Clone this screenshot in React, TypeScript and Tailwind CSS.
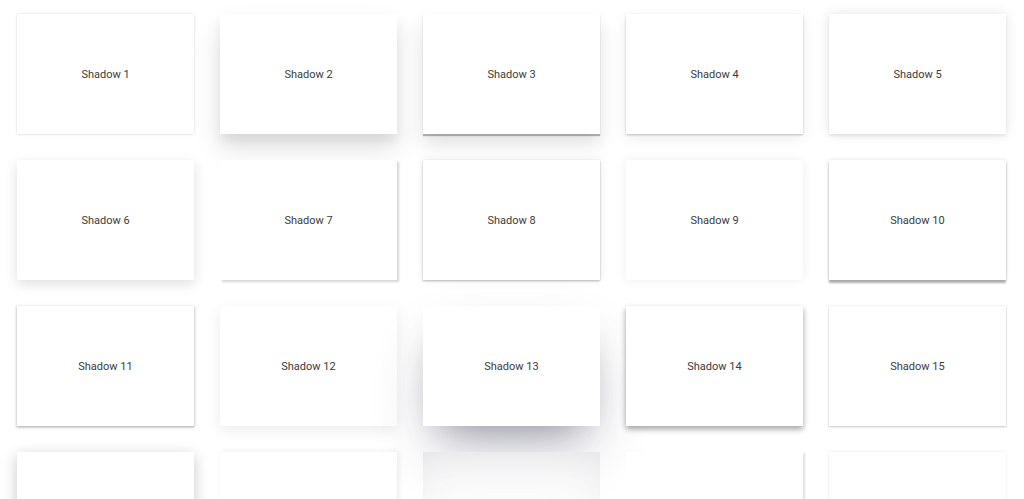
import React from "react";

// Each card shows a different box-shadow recipe.
const shadows: string[] = [
  "shadow-[0_0_2px_rgba(0,0,0,0.14),0_1px_3px_rgba(0,0,0,0.05)]",
  "shadow-[0_14px_26px_rgba(0,0,0,0.12),0_8px_10px_rgba(0,0,0,0.06)]",
  "shadow-[0_2px_1px_rgba(0,0,0,0.28),0_10px_18px_rgba(0,0,0,0.12)]",
  "shadow-[0_1px_2px_rgba(0,0,0,0.22),0_4px_14px_rgba(0,0,0,0.08)]",
  "shadow-[0_0_12px_rgba(0,0,0,0.1),0_2px_3px_rgba(0,0,0,0.08)]",
  "shadow-[0_4px_12px_rgba(0,0,0,0.13)]",
  "shadow-[2px_2px_2px_rgba(0,0,0,0.16)]",
  "shadow-[0_1px_2px_rgba(0,0,0,0.28),0_0_10px_rgba(0,0,0,0.08)]",
  "shadow-[0_0_10px_rgba(0,0,0,0.07)]",
  "shadow-[0_3px_2px_rgba(0,0,0,0.3),0_0_4px_rgba(0,0,0,0.12)]",
  "shadow-[0_1px_2px_rgba(60,64,67,0.3),0_1px_3px_1px_rgba(60,64,67,0.15)]",
  "shadow-[0_4px_14px_rgba(0,0,0,0.08)]",
  "shadow-[0_30px_60px_-12px_rgba(50,50,93,0.3),0_18px_36px_-18px_rgba(0,0,0,0.3)]",
  "shadow-[0_3px_6px_rgba(0,0,0,0.16),0_3px_6px_rgba(0,0,0,0.23)]",
  "shadow-[0_1px_2px_rgba(0,0,0,0.2),0_0_0_1px_rgba(0,0,0,0.03)]",
  "shadow-[0_4px_14px_rgba(0,0,0,0.22)]",
  "shadow-[2px_0_6px_rgba(0,0,0,0.08)]",
  "shadow-[inset_0_30px_60px_-12px_rgba(50,50,93,0.09),inset_0_18px_36px_-18px_rgba(0,0,0,0.06)]",
  "shadow-[2px_1px_2px_rgba(0,0,0,0.12)]",
  "shadow-[0_0_2px_rgba(0,0,0,0.12)]",
];

function Card({ label, shadow }: { label: string; shadow: string }) {
  return (
    <div
      className={`flex h-[120px] w-[177px] items-center justify-center bg-white pt-[2px] text-[11px] text-[#3a3a3a] ${shadow}`}
    >
      {label}
    </div>
  );
}

export default function App() {
  return (
    <div
      className="h-screen overflow-hidden bg-white"
      style={{ fontFamily: "Roboto, 'Noto Sans', sans-serif" }}
    >
      <div className="grid grid-cols-[repeat(5,177px)] gap-[26px] pl-[17px] pt-[14px]">
        {shadows.map((s, i) => (
          <Card key={i} label={`Shadow ${i + 1}`} shadow={s} />
        ))}
      </div>
    </div>
  );
}
